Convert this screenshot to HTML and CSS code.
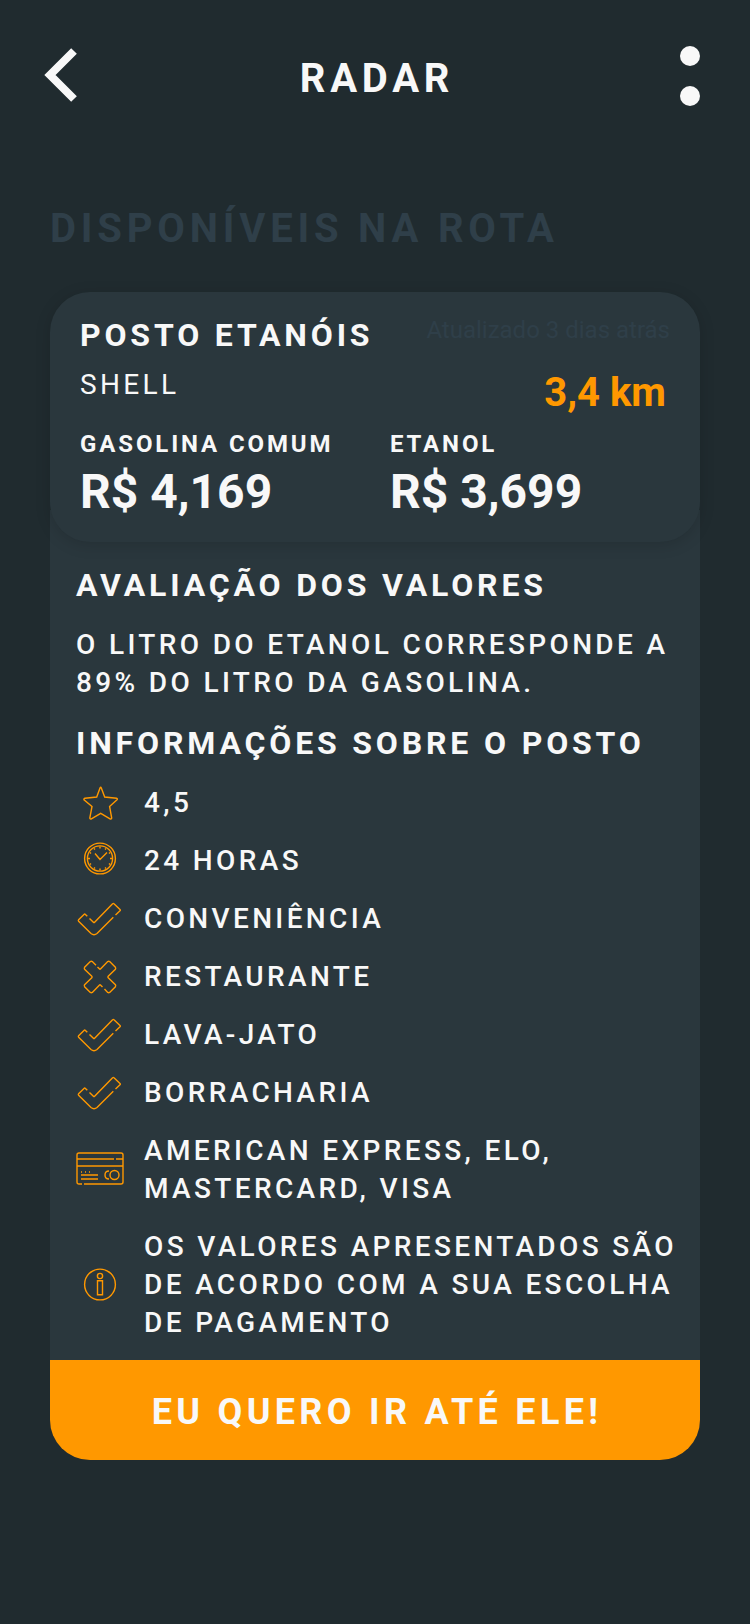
FILE: index.html
```html
<!DOCTYPE html>
<html lang="pt-BR">
<head>
<meta charset="utf-8">
<meta name="viewport" content="width=device-width, initial-scale=1">
<title>Radar</title>
<link rel="stylesheet" href="styles.css">
</head>
<body>
<svg class="sprite" aria-hidden="true">
  <symbol id="check" viewBox="0 0 48 36">
    <path d="M11.300 15.300 9.400 13.400Q8.700 12.700 8 13.400L2.600 18.800Q2 19.500 2.600 20.200L15 32.500Q18 35 21 32.500L37.300 16.300M39.500 14 44 9.800Q44.700 9.200 44 8.500L38 2.800Q37.300 2 36.600 2.800L18.600 21.300Q18 22 17.400 21.300L13.500 17.500"/>
  </symbol>
</svg>
<header class="topbar">
  <button class="icon-button" type="button" aria-label="Voltar">
    <svg class="back" viewBox="0 0 34 56"><path d="M30 5 6 29 30 53"/></svg>
  </button>
  <h1 class="title">RADAR</h1>
  <button class="icon-button menu" type="button" aria-label="Menu">
    <span class="dot"></span><span class="dot"></span>
  </button>
</header>
<main class="content">
  <h2 class="section-title">DISPONÍVEIS NA ROTA</h2>
  <article class="station">
    <section class="summary">
      <div class="summary-head">
        <div>
          <h3 class="heading">POSTO ETANÓIS</h3>
          <p class="brand">SHELL</p>
        </div>
        <div class="status">
          <p class="updated">Atualizado 3 dias atrás</p>
          <p class="distance">3,4 km</p>
        </div>
      </div>
      <dl class="prices">
        <div><dt class="fuel">GASOLINA COMUM</dt><dd class="price">R$ 4,169</dd></div>
        <div><dt class="fuel">ETANOL</dt><dd class="price">R$ 3,699</dd></div>
      </dl>
    </section>
    <section class="details">
      <h3 class="heading">AVALIAÇÃO DOS VALORES</h3>
      <p class="text">O LITRO DO ETANOL CORRESPONDE A 89% DO LITRO DA GASOLINA.</p>
      <h3 class="heading">INFORMAÇÕES SOBRE O POSTO</h3>
      <ul class="info">
        <li class="item">
          <svg class="icon" viewBox="0 0 48 36"><path d="M25.300 3 28.700 12 40.500 13.300Q42 13.700 41 14.800L33.600 21.500 35.700 33Q35.500 34.500 34 33.800L24.700 28.300 15.400 33.800Q14 34.500 13.800 33L16 21.500 8 14.800Q7.500 13.500 9 13.300L20.700 12 24 3Q24.700 1.500 25.300 3z"/></svg>
          <span>4,5</span>
        </li>
        <li class="item">
          <svg class="icon" viewBox="0 1 48 36"><circle cx="24" cy="16.500" r="15.400"/><circle cx="24" cy="16.500" r="12.600"/><path d="m19 11.500 5 6 7-7M24 4.500v2M24 26.500v2M12 16.500h2M34 16.500h2M18 6.500l1 1M30 6.500l-1 1M14 10.500l1 1M34 10.500l-1 1M14 22.500l1-1M34 22.500l-1-1M18 26.500l1-1M30 26.500l-1-1"/></svg>
          <span>24 HORAS</span>
        </li>
        <li class="item">
          <svg class="icon"><use href="#check"/></svg>
          <span>CONVENIÊNCIA</span>
        </li>
        <li class="item">
          <svg class="icon" viewBox="0 0 48 36"><path d="M20 6.300 16.300 2.600Q15.300 2 14.300 2.600L8.600 8.300Q8 9.300 8.600 10.300L15.800 17.300Q16.500 18 15.800 18.700L8.600 25.700Q8 26.700 8.600 27.700L14.300 33.400Q15.300 34 16.300 33.400L23.300 26.200Q24 25.500 24.700 26.200L26.500 28M28.500 30 31.700 33.400Q32.700 34 33.700 33.400L39.400 27.700Q40 26.700 39.400 25.700L32.200 18.700Q31.500 18 32.200 17.300L39.400 10.300Q40 9.300 39.400 8.300L33.700 2.600Q32.700 2 31.700 2.600L24.700 9.800Q24 10.500 23.300 9.800L21.500 8"/></svg>
          <span>RESTAURANTE</span>
        </li>
        <li class="item">
          <svg class="icon"><use href="#check"/></svg>
          <span>LAVA-JATO</span>
        </li>
        <li class="item">
          <svg class="icon"><use href="#check"/></svg>
          <span>BORRACHARIA</span>
        </li>
        <li class="item">
          <svg class="icon" viewBox="0 2 48 36"><path d="M6 34H3Q1 34 1 32V5Q1 3 3 3H45Q47 3 47 5V32Q47 34 45 34H8M1 9H38M40 9H47M1 16H47M5 25H22M5 29H22M5 22h1M9 22h1M13 22h1M33 21q-4 0-4 4t4 4"/><circle cx="38.500" cy="25" r="4.500"/></svg>
          <span>AMERICAN EXPRESS, ELO, MASTERCARD, VISA</span>
        </li>
        <li class="item">
          <svg class="icon" viewBox="0 0 48 36"><circle cx="24" cy="17.500" r="15.400"/><circle cx="24" cy="9" r="2.600"/><path d="M21.500 13.700h5v14h-5z"/></svg>
          <span>OS VALORES APRESENTADOS SÃO DE ACORDO COM A SUA ESCOLHA DE PAGAMENTO</span>
        </li>
      </ul>
    </section>
    <button class="go" type="button">EU QUERO IR ATÉ ELE!</button>
  </article>
</main>
</body>
</html>
```
FILE: styles.css
```css
* {
  box-sizing: border-box;
  margin: 0;
  padding: 0;
}

body {
  min-height: 100vh;
  background: #202b2f;
  color: #f8f8f8;
  font-family: Roboto, "Noto Sans", sans-serif;
}

button {
  border: 0;
  background: none;
  color: inherit;
  font-family: inherit;
  cursor: pointer;
}

.sprite {
  position: absolute;
  width: 0;
  height: 0;
}

.topbar {
  display: flex;
  align-items: flex-start;
  justify-content: space-between;
  padding: 46px 50px 0 44px;
}

.icon-button {
  display: flex;
  width: 34px;
  height: 60px;
}

.menu {
  flex-direction: column;
  align-items: flex-end;
  justify-content: space-between;
}

.back {
  width: 34px;
  height: 56px;
  fill: none;
  stroke: #f8f8f8;
  stroke-width: 8;
}

.dot {
  width: 20px;
  height: 20px;
  border-radius: 50%;
  background: #f8f8f8;
}

.title,
.section-title,
.heading,
.brand,
.fuel,
.text,
.info,
.go {
  letter-spacing: 0.12em;
}

.title {
  padding: 9px 0 0 10px;
  font-size: 40px;
  line-height: 48px;
}

.content {
  padding: 99px 50px 40px;
}

.section-title {
  margin-bottom: 39px;
  color: #2f3f49;
  font-size: 40px;
  line-height: 48px;
}

.summary {
  position: relative;
  padding: 24px 30px 22px;
  border-radius: 40px;
  background: #2a373d;
  box-shadow: 0 3px 16px rgba(0, 0, 0, 0.14);
}

.summary-head {
  display: flex;
  justify-content: space-between;
  margin-bottom: 13px;
}

.heading {
  font-size: 32px;
  line-height: 38px;
}

.brand {
  margin-top: 12px;
  font-size: 28px;
  line-height: 38px;
}

.status {
  text-align: right;
}

.updated {
  color: #2f3f49;
  font-size: 24px;
  line-height: 28px;
}

.distance {
  margin-top: 25px;
  padding-right: 4px;
  color: #ff9800;
  font-size: 40px;
  font-weight: 700;
  line-height: 48px;
}

.prices {
  display: grid;
  grid-template-columns: 310px 1fr;
}

.fuel {
  margin-bottom: 6px;
  font-size: 24px;
  font-weight: 700;
  line-height: 28px;
}

.price {
  font-size: 48px;
  font-weight: 700;
  line-height: 56px;
}

.details {
  display: flex;
  flex-direction: column;
  gap: 22px;
  margin-top: -32px;
  padding: 56px 20px 18px 26px;
  background: #2a373d;
}

.text,
.info {
  font-size: 28px;
  font-weight: 500;
  line-height: 38px;
}

.info {
  display: flex;
  flex-direction: column;
  gap: 20px;
  list-style: none;
}

.item {
  display: flex;
  align-items: center;
  gap: 20px;
}

.icon {
  flex: none;
  width: 48px;
  height: 36px;
  overflow: visible;
  fill: none;
  stroke: #ff9800;
  stroke-width: 1.4;
}

.go {
  display: block;
  width: 100%;
  padding: 31px 20px 27px 24px;
  border-radius: 0 0 40px 40px;
  background: #ff9800;
  font-size: 36px;
  font-weight: 700;
  line-height: 42px;
}
```
